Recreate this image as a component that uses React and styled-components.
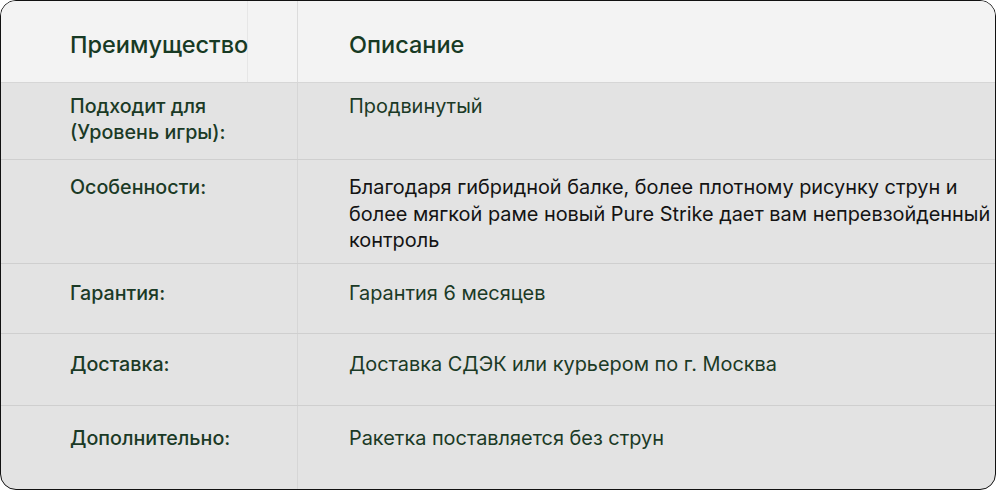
import React from "react";
import styled, { createGlobalStyle } from "styled-components";

const Global = createGlobalStyle`
  html, body { margin: 0; padding: 0; background: #ffffff; }
  body { font-family: Inter, "Noto Sans", sans-serif; }
  * { box-sizing: border-box; }
`;

const Card = styled.div`
  width: 996px;
  height: 490px;
  border: 1px solid #111;
  border-radius: 16px;
  overflow: hidden;
  background: #e3e3e3;
  display: flex;
  flex-direction: column;
`;

const HeaderRow = styled.div`
  display: grid;
  grid-template-columns: 247px 50px 1fr;
  height: 82px;
  flex: none;
  background: #f3f3f3;
  border-bottom: 1px solid #d6d6d6;
`;

const HeadCell = styled.div`
  display: flex;
  align-items: center;
  padding-left: ${(p) => p.$pl || 0}px;
  border-right: ${(p) => (p.$line ? `1px solid ${p.$line}` : "none")};
  font-size: 23.5px;
  font-weight: 500;
  color: #173a24;
  white-space: nowrap;
  padding-top: 5px;
`;

const Row = styled.div`
  display: grid;
  grid-template-columns: 297px 1fr;
  border-bottom: ${(p) => (p.$last ? "none" : "1px solid #cfcfcf")};
  flex: ${(p) => (p.$last ? 1 : "none")};
`;

const Label = styled.div`
  padding: ${(p) => p.$pt}px 0 ${(p) => p.$pb}px 69px;
  border-right: 1px solid #d6d6d6;
  font-size: 19.7px;
  line-height: 26px;
  font-weight: 500;
  color: #1b3a26;
  white-space: nowrap;
`;

const Desc = styled.div`
  padding: ${(p) => p.$pt}px 0 ${(p) => p.$pb}px 51px;
  font-size: 19.9px;
  line-height: 26.5px;
  font-weight: 400;
  color: ${(p) => (p.$dark ? "#141414" : "#1b3a26")};
  white-space: nowrap;
`;

const rows = [
  { label: ["Подходит для", "(Уровень игры):"], desc: ["Продвинутый"], pt: 10, pb: 14 },
  {
    label: ["Особенности:"],
    desc: [
      "Благодаря гибридной балке, более плотному рисунку струн и",
      "более мягкой раме новый Pure Strike дает вам непревзойденный",
      "контроль",
    ],
    dark: true,
    pt: 14,
    pb: 9,
  },
  { label: ["Гарантия:"], desc: ["Гарантия 6 месяцев"], pt: 16, pb: 27 },
  { label: ["Доставка:"], desc: ["Доставка СДЭК или курьером по г. Москва"], pt: 17, pb: 27 },
  { label: ["Дополнительно:"], desc: ["Ракетка поставляется без струн"], pt: 19, pb: 0, last: true },
];

const lines = (arr) =>
  arr.map((t, i) => (
    <React.Fragment key={i}>
      {t}
      {i < arr.length - 1 && <br />}
    </React.Fragment>
  ));

export default function App() {
  return (
    <>
      <Global />
      <Card>
        <HeaderRow>
          <HeadCell $pl={69} $line="#e6e6e6">Преимущество</HeadCell>
          <HeadCell $line="#dcdcdc" />
          <HeadCell $pl={51}>Описание</HeadCell>
        </HeaderRow>
        {rows.map((r, i) => (
          <Row key={i} $last={r.last}>
            <Label $pt={r.pt} $pb={r.pb}>{lines(r.label)}</Label>
            <Desc $pt={r.pt} $pb={r.pb} $dark={r.dark}>{lines(r.desc)}</Desc>
          </Row>
        ))}
      </Card>
    </>
  );
}
